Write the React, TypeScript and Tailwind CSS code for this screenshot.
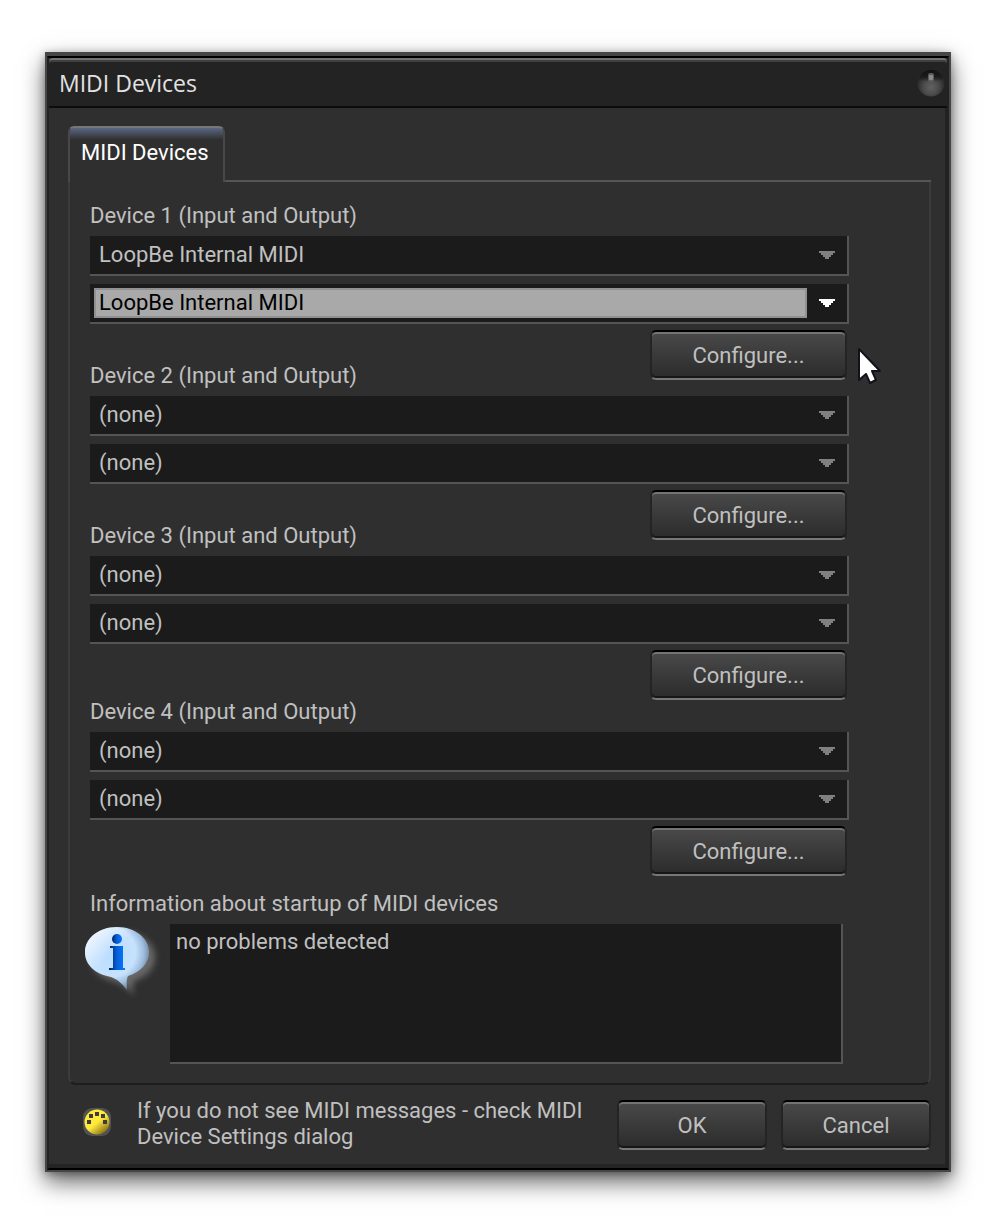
import { useState } from 'react';
import clsx from 'clsx';

const devices = [
  { num: 1, value: 'LoopBe Internal MIDI', active: true, spacing: '-mb-[18px]' },
  { num: 2, value: '(none)', active: false, spacing: '-mb-[18px]' },
  { num: 3, value: '(none)', active: false, spacing: '-mb-[2px]' },
  { num: 4, value: '(none)', active: false, spacing: 'mb-[14px]' }
];

const options = ['(none)', 'LoopBe Internal MIDI'];

type DeviceSelectProps = { label: string; initial: string; focused?: boolean };

const DeviceSelect = ({ label, initial, focused = false }: DeviceSelectProps) => {
  const [value, setValue] = useState(initial);

  return (
    <div className="flex h-10 items-center border-b-2 border-r-2 border-[#555555] bg-[#1b1b1b] pl-1">
      <select
        aria-label={label}
        value={value}
        onChange={(e) => setValue(e.target.value)}
        className={clsx(
          'h-[30px] min-w-0 flex-1 appearance-none border-2 pl-[3px] leading-[26px] outline-none',
          focused
            ? 'border-[#919191] bg-[#a9a9a9] text-black'
            : 'border-transparent bg-transparent text-[#c0c0c0]'
        )}
      >
        {options.map((o) => (
          <option key={o}>{o}</option>
        ))}
      </select>
      <svg
        viewBox="0 0 16 8"
        shapeRendering="crispEdges"
        className={clsx('mx-3 h-2 w-4', focused ? 'text-white' : 'text-[#808080]')}
      >
        <path d="M0 0h16v2h-2v2h-2v2h-2v2H6V6H4V4H2V2H0z" fill="currentColor" />
      </svg>
    </div>
  );
};

type DialogButtonProps = { children: string; className?: string };

const DialogButton = ({ children, className }: DialogButtonProps) => (
  <button
    type="button"
    className={clsx(
      'h-[50px] shrink-0 rounded-md border-2 border-b-[#777777] border-l-[#242424] border-r-[#242424] border-t-black bg-linear-to-b from-[#4a4a4a] to-[#2b2b2b] text-[#c0c0c0] shadow-[inset_0_2px_0_#737373,inset_0_-2px_0_#161616]',
      className
    )}
  >
    {children}
  </button>
);

const Pointer = () => (
  <svg viewBox="0 0 24 40" className="absolute -right-8 top-[17px] h-10 w-6">
    <path
      d="M2 2v31l7-6 4 9 6-3-4-9h8z"
      fill="#fff"
      stroke="#12121c"
      strokeWidth="2"
      strokeLinejoin="round"
    />
  </svg>
);

const bubblePath =
  'M33 3C15 3 1 14 1 28c0 13 10 22 26 25 8 3 11 7 16 13 0-6-1-10 1-14 13-4 21-13 21-24C65 14 51 3 33 3z';

const InfoBubble = () => (
  <svg viewBox="0 0 80 80" className="h-20 w-20 shrink-0">
    <defs>
      <radialGradient id="bubble" cx="0.4" cy="0.4" r="0.65">
        <stop offset="0" stopColor="#b9dcff" />
        <stop offset="0.6" stopColor="#c6e2fd" />
        <stop offset="0.8" stopColor="#9dbbdc" />
        <stop offset="1" stopColor="#62788f" />
      </radialGradient>
      <linearGradient id="shine" x1="0" y1="0" x2="0.6" y2="0.6">
        <stop offset="0" stopColor="#fff" stopOpacity="0.95" />
        <stop offset="0.7" stopColor="#fff" stopOpacity="0" />
      </linearGradient>
      <linearGradient id="letter">
        <stop offset="0" stopColor="#00245c" />
        <stop offset="0.5" stopColor="#0560dc" />
        <stop offset="1" stopColor="#0878ff" />
      </linearGradient>
      <filter id="soft" x="-20%" y="-20%" width="150%" height="150%">
        <feGaussianBlur stdDeviation="3" />
      </filter>
    </defs>
    <path d={bubblePath} transform="translate(6 5)" fill="#686868" filter="url(#soft)" />
    <path d={bubblePath} fill="url(#bubble)" />
    <path d={bubblePath} fill="url(#shine)" />
    <circle cx="33" cy="15" r="5" fill="url(#letter)" />
    <path d="M26 22h13v22h2v2H25v-2h4V24h-3z" fill="url(#letter)" />
  </svg>
);

const MidiPort = () => (
  <svg viewBox="0 0 28 28" className="mb-[14px] h-7 w-7 shrink-0">
    <defs>
      <linearGradient id="port" x1="0.2" y1="0.1" x2="0.85" y2="0.9">
        <stop offset="0.5" stopColor="#ffe93b" />
        <stop offset="0.75" stopColor="#c4ad2c" />
        <stop offset="1" stopColor="#85720e" />
      </linearGradient>
    </defs>
    <rect width="28" height="28" rx="9" fill="#525252" />
    <circle cx="14" cy="14" r="12.5" fill="url(#port)" />
    <path d="M4 12h4v4H4zM6 6h4v4H6zM12 4h4v4h-4zM18 6h4v4h-4zM20 12h4v4h-4z" fill="#3c3c3c" />
  </svg>
);

const CloseKnob = () => (
  <svg viewBox="0 0 28 28" className="h-7 w-7">
    <defs>
      <radialGradient id="knob" cx="0.5" cy="0.65" r="0.55">
        <stop offset="0" stopColor="#626262" />
        <stop offset="0.5" stopColor="#4c4c4c" />
        <stop offset="1" stopColor="#262626" />
      </radialGradient>
      <linearGradient id="knob-top" x1="0" y1="0" x2="0" y2="1">
        <stop offset="0" stopColor="#121212" />
        <stop offset="0.5" stopColor="#1a1a1a" />
        <stop offset="1" stopColor="#1a1a1a" stopOpacity="0" />
      </linearGradient>
    </defs>
    <circle cx="14" cy="14" r="13.5" fill="url(#knob)" />
    <path d="M2 10C4 3 9 1 14 1s10 2 12 9c-7 4-17 4-24 0z" fill="url(#knob-top)" />
    <rect x="11" y="4" width="6" height="9" rx="2" fill="#5c5c5c" />
    <rect x="12" y="6" width="4" height="5" rx="1" fill="#8a8a8a" />
  </svg>
);

const App = () => (
  <main className="min-h-screen bg-white px-[45px] pt-[52px] pb-[52px]">
    <section
      role="dialog"
      aria-labelledby="dialog-title"
      className="border-2 border-t-4 border-[#464646] bg-[#2f2f2f] font-[Roboto,'Liberation_Sans',sans-serif] text-[22px] text-[#c0c0c0] shadow-[0_10px_22px_rgba(0,0,0,0.6),0_2px_8px_rgba(0,0,0,0.3)]"
    >
      <div className="border-2 border-b-black border-l-[#222222] border-r-[#222222] border-t-black">
        <header className="flex h-[50px] items-center justify-between rounded-t border-b-2 border-t-2 border-b-[#0c0c0c] border-t-[#727272] bg-[#232323] pl-[10px] pr-[2px] shadow-[inset_0_2px_0_#404040]">
          <h1
            id="dialog-title"
            className="font-['Open_Sans','Noto_Sans',sans-serif] text-[23px] text-[#e2e2e2]"
          >
            MIDI Devices
          </h1>
          <button type="button" aria-label="Close">
            <CloseKnob />
          </button>
        </header>

        <div className="border-b-4 border-r-2 border-b-[#242424] border-r-[#222222] pb-[14px] pl-[19px] pr-[14px] pt-[18px]">
          <div role="tablist" className="flex items-end">
            <button
              type="button"
              role="tab"
              aria-selected="true"
              className="h-14 rounded-t-md border-2 border-b-0 border-[#484848] border-t-[#777777] bg-linear-to-b from-[#5a6784] to-[#2f2f2f] to-[12px] pb-[6px] pl-[11px] pr-[14px] text-white"
            >
              MIDI Devices
            </button>
            <div className="h-[2px] flex-1 bg-[#555555]" />
          </div>

          <div
            role="tabpanel"
            className="rounded-b-lg border-2 border-t-0 border-[#3c3c3c] border-b-[#1e1e1e] pb-[19px] pl-5 pr-[80px] pt-5"
          >
            {devices.map((d) => (
              <fieldset key={d.num} className={d.spacing}>
                <legend className="mb-[6px] h-7 leading-7">Device {d.num} (Input and Output)</legend>
                <div className="grid gap-2">
                  <DeviceSelect label={`Device ${d.num} input`} initial={d.value} />
                  <DeviceSelect
                    label={`Device ${d.num} output`}
                    initial={d.value}
                    focused={d.active}
                  />
                </div>
                <div className="relative mt-[6px] flex justify-end pr-[2px]">
                  <DialogButton className="w-[197px]">Configure...</DialogButton>
                  {d.active && <Pointer />}
                </div>
              </fieldset>
            ))}

            <label htmlFor="startup-info" className="mb-[6px] block h-7 leading-7">
              Information about startup of MIDI devices
            </label>
            <div className="-ml-[6px] mr-[6px] flex gap-[6px]">
              <InfoBubble />
              <textarea
                id="startup-info"
                readOnly
                value="no problems detected"
                className="h-[140px] min-w-0 flex-1 resize-none border-b-2 border-r-2 border-[#555555] bg-[#1b1b1b] px-[6px] py-1 leading-7 outline-none"
              />
            </div>
          </div>

          <footer className="flex items-end pl-[15px] pt-[13px]">
            <MidiPort />
            <p className="ml-[26px] max-w-[460px] flex-1 leading-[26px]">
              If you do not see MIDI messages - check MIDI Device Settings dialog
            </p>
            <div className="ml-auto flex gap-[14px]">
              <DialogButton className="w-[150px]">OK</DialogButton>
              <DialogButton className="w-[150px]">Cancel</DialogButton>
            </div>
          </footer>
        </div>
      </div>
    </section>
  </main>
);

export default App;
